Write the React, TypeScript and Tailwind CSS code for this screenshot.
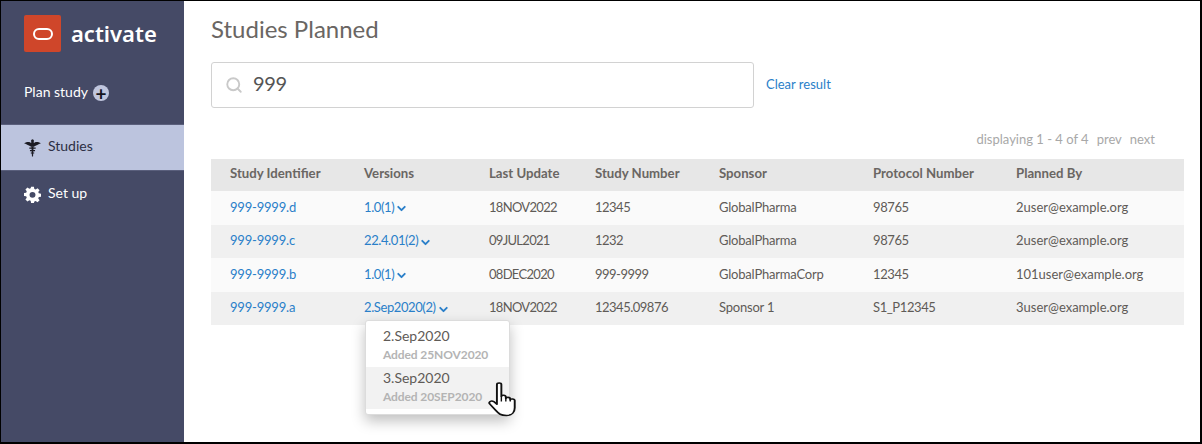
import { Search, ChevronDown } from "lucide-react";

const rowCols = "grid grid-cols-[134px_125px_106px_124px_154px_143px_1fr] pl-[19px] items-center";

const rows = [
  { id: "999-9999.d", version: "1.0(1)", date: "18NOV2022", num: "12345", sponsor: "GlobalPharma", protocol: "98765", by: "2user@example.org", h: "h-[34px]", bg: "bg-[#fafafa]" },
  { id: "999-9999.c", version: "22.4.01(2)", date: "09JUL2021", num: "1232", sponsor: "GlobalPharma", protocol: "98765", by: "2user@example.org", h: "h-[33px]", bg: "bg-[#f0f0f0]" },
  { id: "999-9999.b", version: "1.0(1)", date: "08DEC2020", num: "999-9999", sponsor: "GlobalPharmaCorp", protocol: "12345", by: "101user@example.org", h: "h-[34px]", bg: "bg-[#fafafa]" },
  { id: "999-9999.a", version: "2.Sep2020(2)", date: "18NOV2022", num: "12345.09876", sponsor: "Sponsor 1", protocol: "S1_P12345", by: "3user@example.org", h: "h-[33px]", bg: "bg-[#f0f0f0]" },
];

const headers = ["Study Identifier", "Versions", "Last Update", "Study Number", "Sponsor", "Protocol Number", "Planned By"];

const StudiesIcon = () => (
  <svg width="17" height="19" viewBox="0 0 16 18" fill="#1c1c24">
    <path d="M0 5 C3 3.200 5.500 3.600 6.800 4.800 V3.400 A1.400 1.400 0 1 1 9.200 3.400 V4.800 C10.500 3.600 13 3.200 16 5 C13.500 5.800 11.500 7.400 9.200 8.200 H6.800 C4.500 7.400 2.500 5.800 0 5 Z" />
    <path d="M7 8 H9 L8.500 17.500 H7.500 Z" />
    <path d="M5 9 H11 V10.300 H5 Z M5.600 11.400 H10.400 V12.600 H5.600 Z M6.400 13.700 H9.600 V14.700 H6.400 Z" />
  </svg>
);

const GearIcon = () => (
  <svg width="17" height="17" viewBox="0 0 24 24" fill="#fff">
    <path
      fillRule="evenodd"
      d="M10 1h4l.6 3.100 1.900.8L19.100 3 22 5.900l-1.900 2.600.8 1.900L24 11v4l-3.100.6-.8 1.900 1.900 2.600-2.900 2.900-2.600-1.900-1.900.8L14 24h-4l-.6-3.100-1.900-.8L4.900 22 2 19.100l1.900-2.600-.8-1.900L0 14v-4l3.100-.6.8-1.900L2 4.900 4.900 2l2.600 1.900 1.900-.8L10 1Zm2 7.300a4.200 4.200 0 1 0 0 8.400 4.200 4.200 0 0 0 0-8.400Z"
    />
  </svg>
);

const HandCursor = () => (
  <svg width="28" height="35" viewBox="1 1 22 34" preserveAspectRatio="none" className="absolute left-[488px] top-[382px]">
    <path
      d="M8 3.500C8 1.500 11.500 1.500 11.500 3.500V15C11.500 13.500 15 13.500 15 15.500V17C15 15.500 18.500 15.500 18.500 17.500V18.500C18.500 17 22 17 22 19V26C22 30 20 33.500 15.500 33.500C11 33.500 9.500 32 7 28.500L2.500 22.500C1 20.500 3.500 18.500 5.500 20L8 22.500Z"
      fill="#fff"
      stroke="#111"
      strokeWidth="1.500"
      strokeLinejoin="round"
    />
    <path d="M11.500 15V20M15 16V20M18.500 17.500V20" stroke="#111" strokeWidth="1.100" fill="none" />
  </svg>
);

export default function App() {
  return (
    <div className="relative flex h-[444px] w-[1202px] overflow-hidden bg-white font-['Lato',sans-serif] text-[13px] text-[#5f5b57]">
      <div className="flex h-full w-[1202px] border-t border-l border-r-2 border-b-2 border-black">
        <aside className="flex w-[183px] shrink-0 flex-col bg-[#454a66]">
          <div className="flex items-center pl-[23px] pt-[14px]">
            <div className="flex h-[37px] w-[37px] items-center justify-center rounded-[2px] bg-[#cf462a]">
              <div className="h-[12px] w-[20px] rounded-[6px] border-[2.5px] border-white" />
            </div>
            <span className="ml-[10px] -mt-[1px] font-['Noto_Sans',sans-serif] text-[22px] font-semibold text-white">activate</span>
          </div>
          <div className="flex items-center pl-[23px] pt-[29px] text-[14px] text-white">
            <span>Plan study</span>
            <span className="ml-[5px] mt-[3px] flex h-[16px] w-[16px] items-center justify-center rounded-full bg-[#c0c6de] text-[19px] font-bold leading-none text-[#15151f]">+</span>
          </div>
          <div className="mt-[22px] flex h-[47px] items-center gap-[7px] border-y border-[#5a5f7c] bg-[#bcc4de] pl-[23px] text-[14px] text-[#2c2f44]">
            <StudiesIcon />
            <span className="-mt-[4px]">Studies</span>
          </div>
          <div className="flex h-[46px] items-center gap-[7px] pl-[23px] text-[14px] text-white">
            <GearIcon />
            <span className="-mt-[3px]">Set up</span>
          </div>
        </aside>

        <main className="flex-1 pl-[27px] pr-[16px]">
          <h1 className="pt-[13px] text-[24px] leading-[30px] text-[#6a6663]">Studies Planned</h1>
          <div className="mt-[18px] flex items-center">
            <div className="flex h-[46px] w-[543px] items-center rounded-[3px] border border-[#d2d2d2] pb-[4px] pl-[13px]">
              <Search size={18} strokeWidth={2.5} className="mt-[4px] text-[#c9c9c9]" />
              <span className="ml-[10px] text-[20px] tracking-[-0.3px] text-[#555]">999</span>
            </div>
            <a className="ml-[12px] text-[#2a7fc9]">Clear result</a>
          </div>
          <div className="mt-[22px] flex justify-end gap-[8px] pr-[29px] text-[#a8a8a8]">
            <span>displaying 1 - 4 of 4</span>
            <span>prev</span>
            <span>next</span>
          </div>
          <div className={`${rowCols} mt-[9px] h-[32px] bg-[#e7e7e7] pb-[1px] text-[13.200px] font-bold text-[#6a6663]`}>
            {headers.map((h) => (
              <span key={h}>{h}</span>
            ))}
          </div>
          {rows.map((r) => (
            <div key={r.id} className={`${rowCols} ${r.h} ${r.bg}`}>
              <a className="tracking-[-0.2px] text-[#2a7fc9]">{r.id}</a>
              <a className="flex items-center tracking-[-0.4px] text-[#2a7fc9]">
                {r.version}
                <ChevronDown size={13} strokeWidth={3.5} className="ml-[1px] mt-[2px]" />
              </a>
              <span className="tracking-[-0.7px]">{r.date}</span>
              <span className="tracking-[-0.5px]">{r.num}</span>
              <span className="tracking-[-0.2px]">{r.sponsor}</span>
              <span className="tracking-[-0.4px]">{r.protocol}</span>
              <span>{r.by}</span>
            </div>
          ))}
        </main>
      </div>

      <div className="absolute left-[365px] top-[320px] w-[145px] rounded-[3px] border border-[#dcdcdc] bg-white pb-[5px] pt-[5px] shadow-[0_6px_14px_rgba(0,0,0,0.25)]">
        <div className="h-[41px] pl-[17px]">
          <div className="text-[14px] leading-[20px] text-[#5f5b57]">2.Sep2020</div>
          <div className="text-[12px] font-bold leading-[17px] tracking-[-0.1px] text-[#b4b4b4]">Added 25NOV2020</div>
        </div>
        <div className="h-[42px] bg-[#f2f2f2] pl-[17px]">
          <div className="text-[14px] leading-[21px] text-[#5f5b57]">3.Sep2020</div>
          <div className="text-[12px] font-bold leading-[17px] tracking-[-0.1px] text-[#b4b4b4]">Added 20SEP2020</div>
        </div>
      </div>
      <HandCursor />
    </div>
  );
}
